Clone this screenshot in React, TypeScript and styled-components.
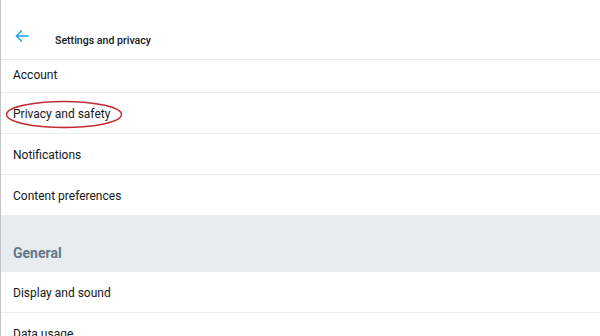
import styled, { createGlobalStyle } from "styled-components";

const GlobalStyle = createGlobalStyle`
  html, body {
    margin: 0;
    padding: 0;
    background: #ffffff;
  }
  body {
    font-family: Roboto, "Liberation Sans", Arial, sans-serif;
    color: #14171a;
    overflow: hidden;
  }
`;

const Page = styled.div`
  width: 600px;
  height: 336px;
  box-sizing: border-box;
  border-left: 1px solid #c4c4c4;
  background: #ffffff;
  overflow: hidden;
`;

const Header = styled.header`
  height: 60px;
  box-sizing: border-box;
  border-bottom: 1px solid #e1e8ed;
  display: flex;
  align-items: flex-end;
  padding: 0 0 12px 13px;
`;

const BackButton = styled.button`
  border: none;
  background: none;
  padding: 0;
  width: 16px;
  height: 16px;
  display: flex;
  align-items: center;
  justify-content: center;
  margin-bottom: 3px;
  cursor: pointer;
`;

const Title = styled.h1`
  margin: 0 0 0 25px;
  font-size: 10.6px;
  font-weight: 500;
  color: #14171a;
`;

const Row = styled.div<{ $height?: number; $shift?: number }>`
  position: relative;
  height: ${({ $height }) => $height ?? 39}px;
  box-sizing: content-box;
  border-bottom: 1px solid #e6ecf0;
  display: flex;
  align-items: center;
  padding: 1px 12px ${({ $shift }) => $shift ?? 0}px 12px;
  font-size: 12px;
  color: #14171a;
`;

const SectionHeader = styled.div`
  height: 56px;
  box-sizing: border-box;
  background: #e6ecf0;
  display: flex;
  align-items: flex-end;
  padding: 0 12px 11px;
  font-size: 14px;
  font-weight: 700;
  color: #657786;
`;

const Highlight = styled.svg`
  position: absolute;
  left: 4px;
  top: 7px;
  width: 118px;
  height: 29px;
  pointer-events: none;
`;

const items = ["Notifications", "Content preferences"];

export default function App() {
  return (
    <>
      <GlobalStyle />
      <Page>
        <Header>
          <BackButton aria-label="Back">
            <svg width="14" height="12" viewBox="0 0 14 12" fill="none">
              <path
                d="M13 6H1.6M6.4 1L1.4 6l5 5"
                stroke="#1da1f2"
                strokeWidth="1.5"
                strokeLinecap="round"
                strokeLinejoin="round"
              />
            </svg>
          </BackButton>
          <Title>Settings and privacy</Title>
        </Header>
        <Row $height={27} $shift={4}>Account</Row>
        <Row>
          Privacy and safety
          <Highlight viewBox="0 0 118 29">
            <ellipse
              cx="59"
              cy="14.5"
              rx="57.5"
              ry="13"
              fill="none"
              stroke="#c42a32"
              strokeWidth="1.5"
            />
          </Highlight>
        </Row>
        {items.map((label) => (
          <Row key={label}>{label}</Row>
        ))}
        <SectionHeader>General</SectionHeader>
        <Row>Display and sound</Row>
        <Row>Data usage</Row>
      </Page>
    </>
  );
}
